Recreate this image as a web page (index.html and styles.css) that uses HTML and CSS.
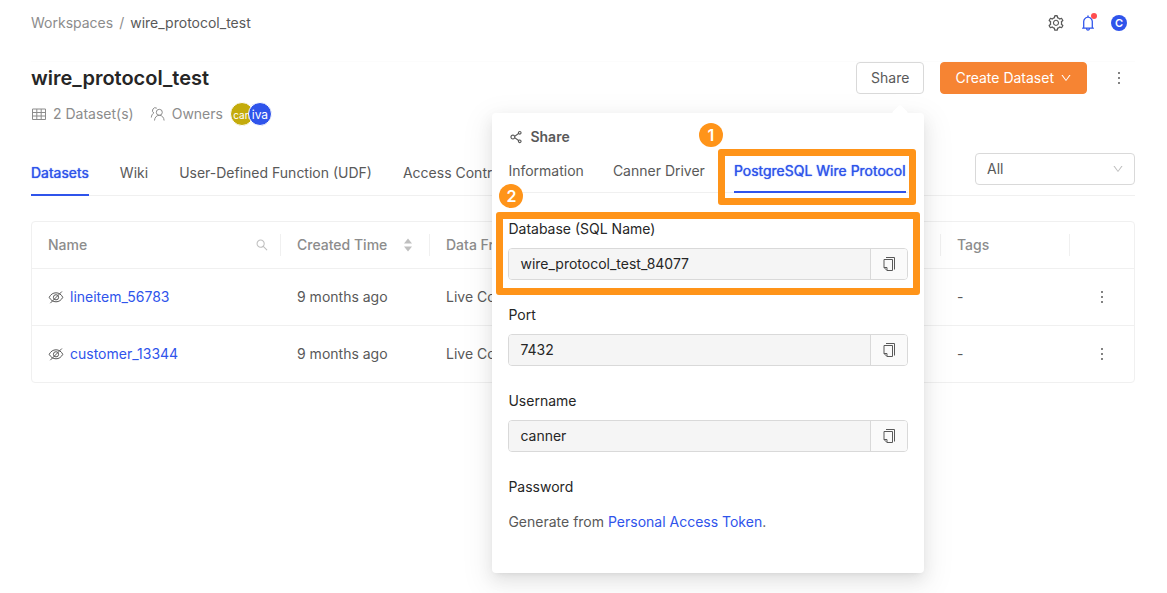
FILE: index.html
```html
<!DOCTYPE html>
<html lang="en">
<head>
<meta charset="utf-8">
<meta name="viewport" content="width=device-width, initial-scale=1">
<title>wire_protocol_test</title>
<link rel="stylesheet" href="styles.css">
</head>
<body>
<svg class="sprite" aria-hidden="true">
  <symbol id="i-gear" viewBox="0 0 1024 1024"><path d="M924.8 625.7l-65.5-56c3.1-19 4.7-38.4 4.7-57.8s-1.6-38.8-4.7-57.8l65.5-56a32.03 32.03 0 009.3-35.2l-.9-2.6a443.74 443.74 0 00-79.7-137.9l-1.8-2.1a32.12 32.12 0 00-35.1-9.5l-81.3 28.9c-30-24.6-63.5-44-99.7-57.6l-15.7-85a32.05 32.05 0 00-25.8-25.7l-2.7-.5c-52.1-9.4-106.9-9.4-159 0l-2.7.5a32.05 32.05 0 00-25.8 25.7l-15.8 85.4a351.86 351.86 0 00-99 57.4l-81.9-29.1a32 32 0 00-35.1 9.5l-1.8 2.1a446.02 446.02 0 00-79.7 137.9l-.9 2.6c-4.5 12.5-.8 26.5 9.3 35.2l66.3 56.6c-3.1 18.8-4.6 38-4.6 57.1 0 19.2 1.5 38.4 4.6 57.1L99 625.5a32.03 32.03 0 00-9.3 35.2l.9 2.6c18.1 50.4 44.9 96.9 79.7 137.9l1.8 2.1a32.12 32.12 0 0035.1 9.5l81.9-29.1c29.8 24.5 63.1 43.9 99 57.4l15.8 85.4a32.05 32.05 0 0025.8 25.7l2.7.5a449.4 449.4 0 00159 0l2.7-.5a32.05 32.05 0 0025.8-25.7l15.7-85a350 350 0 0099.7-57.6l81.3 28.9a32 32 0 0035.1-9.5l1.8-2.1c34.8-41.1 61.6-87.5 79.7-137.9l.9-2.6c4.5-12.3.8-26.3-9.3-35zM788.3 465.9c2.5 15.1 3.8 30.6 3.8 46.1s-1.3 31-3.8 46.1l-6.6 40.1 74.7 63.9a370.03 370.03 0 01-42.6 73.6L721 702.8l-31.4 25.8c-23.9 19.6-50.5 35-79.3 45.8l-38.1 14.3-17.9 97a377.5 377.5 0 01-85 0l-17.9-97.2-37.8-14.5c-28.5-10.8-55-26.2-78.7-45.7l-31.4-25.9-93.4 33.2c-17-22.9-31.2-47.6-42.6-73.6l75.5-64.5-6.5-40c-2.4-14.9-3.7-30.3-3.7-45.5 0-15.3 1.2-30.6 3.7-45.5l6.5-40-75.5-64.5c11.3-26.1 25.6-50.7 42.6-73.6l93.4 33.2 31.4-25.9c23.7-19.5 50.2-34.9 78.7-45.7l37.9-14.3 17.9-97.2c28.1-3.2 56.8-3.2 85 0l17.9 97 38.1 14.3c28.7 10.8 55.4 26.2 79.3 45.8l31.4 25.8 92.8-32.9c17 22.9 31.2 47.6 42.6 73.6L781.8 426l6.5 39.9zM512 326c-97.2 0-176 78.8-176 176s78.8 176 176 176 176-78.8 176-176-78.8-176-176-176zm79.2 255.2A111.6 111.6 0 01512 614c-29.9 0-58-11.7-79.2-32.8A111.6 111.6 0 01400 502c0-29.9 11.7-58 32.8-79.2C454 401.6 482.1 390 512 390c29.9 0 58 11.6 79.2 32.8A111.6 111.6 0 01624 502c0 29.9-11.7 58-32.8 79.2z"/></symbol>
  <symbol id="i-bell" viewBox="0 0 1024 1024"><path d="M816 768h-24V428c0-141.1-104.3-257.7-240-277.1V112c0-22.1-17.9-40-40-40s-40 17.9-40 40v38.9c-135.7 19.4-240 136-240 277.1v340h-24c-17.7 0-32 14.3-32 32v32c0 4.4 3.6 8 8 8h216c0 61.8 50.2 112 112 112s112-50.2 112-112h216c4.4 0 8-3.6 8-8v-32c0-17.7-14.3-32-32-32zM512 888c-26.5 0-48-21.5-48-48h96c0 26.5-21.5 48-48 48zM304 768V428c0-55.6 21.6-107.8 60.9-147.1S456.4 220 512 220c55.6 0 107.8 21.6 147.1 60.9S720 372.4 720 428v340H304z"/></symbol>
  <symbol id="i-down" viewBox="0 0 1024 1024"><path d="M884 256h-75c-5.1 0-9.9 2.5-12.9 6.6L512 654.2 227.9 262.6c-3-4.1-7.8-6.6-12.9-6.6h-75c-6.5 0-10.3 7.4-6.5 12.7l352.6 486.1c12.8 17.6 39 17.6 51.7 0l352.6-486.1c3.9-5.3.1-12.7-6.4-12.7z"/></symbol>
  <symbol id="i-more" viewBox="0 0 1024 1024"><path d="M448 192a64 64 0 10128 0 64 64 0 10-128 0zm0 320a64 64 0 10128 0 64 64 0 10-128 0zm0 320a64 64 0 10128 0 64 64 0 10-128 0z"/></symbol>
  <symbol id="i-search" viewBox="0 0 1024 1024"><path d="M909.6 854.5L649.9 594.8C690.2 542.7 712 479 712 412c0-80.2-31.3-155.4-87.9-212.1-56.6-56.7-132-87.9-212.1-87.9s-155.5 31.3-212.1 87.9C143.2 256.5 112 331.8 112 412c0 80.1 31.3 155.5 87.9 212.1C256.5 680.8 331.8 712 412 712c67 0 130.6-21.8 182.7-62l259.7 259.6a8.2 8.2 0 0011.6 0l43.6-43.5a8.2 8.2 0 000-11.6zM570.4 570.4C528 612.7 471.8 636 412 636s-116-23.3-158.4-65.6C211.3 528 188 471.8 188 412s23.3-116.1 65.6-158.4C296 211.3 352.2 188 412 188s116.1 23.2 158.4 65.6S636 352.2 636 412s-23.3 116.1-65.6 158.4z"/></symbol>
  <symbol id="i-share" viewBox="0 0 1024 1024"><path d="M752 664c-28.5 0-54.8 10-75.4 26.7L469.4 540.8a160.68 160.68 0 000-57.6l207.2-149.9C697.2 350 723.5 360 752 360c66.2 0 120-53.8 120-120s-53.8-120-120-120-120 53.8-120 120c0 11.6 1.6 22.7 4.7 33.3L439.9 415.8C410.7 377.1 364.3 352 312 352c-88.4 0-160 71.6-160 160s71.6 160 160 160c52.3 0 98.7-25.1 127.9-63.8l196.8 142.5c-3.1 10.6-4.7 21.8-4.7 33.3 0 66.2 53.8 120 120 120s120-53.8 120-120-53.8-120-120-120zm0-476c28.7 0 52 23.3 52 52s-23.3 52-52 52-52-23.3-52-52 23.3-52 52-52zM312 600c-48.5 0-88-39.5-88-88s39.5-88 88-88 88 39.5 88 88-39.5 88-88 88zm440 236c-28.7 0-52-23.3-52-52s23.3-52 52-52 52 23.3 52 52-23.3 52-52 52z"/></symbol>
  <symbol id="i-table" viewBox="0 0 16 16"><path class="line" d="M1.500 3h13v10.500h-13zM1.500 6.500h13M1.500 10h13M5.800 3v10.500M10.200 3v10.500"/></symbol>
  <symbol id="i-team" viewBox="0 0 16 16"><path class="line" d="M9.300 9.300a3 3 0 100-6 3 3 0 000 6zM4.500 14.500c.2-3 2-5.200 4.800-5.200s4.600 2.200 4.800 5.200M6.800 2.200A2.700 2.700 0 103.800 7C2.300 7.800 1.500 9.500 1.300 11.500"/></symbol>
  <symbol id="i-hidden" viewBox="0 0 16 16"><path class="line" d="M1.200 8.300C2.800 5.300 5.100 3.800 8 3.800s5.200 1.500 6.800 4.500c-1.600 3-3.900 4.500-6.800 4.500s-5.200-1.500-6.800-4.500zM8 10.900a2.600 2.600 0 100-5.200 2.600 2.600 0 000 5.200zM2.300 14.200L13.900 2.500"/></symbol>
  <symbol id="i-copy" viewBox="0 0 16 16"><path class="line" d="M5 1.500h8.500v12M3 3.500h8.500v11h-5.500l-3-3zM3 11.500h3v3"/></symbol>
  <symbol id="i-sort" viewBox="0 0 10 14"><path d="M5 .5l4 5H1zM5 13.500l4-5H1z"/></symbol>
</svg>

<div class="page">
  <header class="topbar">
    <nav class="crumbs" aria-label="Breadcrumb">
      <a class="crumb" href="#">Workspaces</a><span>/</span><span class="crumb-now">wire_protocol_test</span>
    </nav>
    <div class="tools">
      <button class="icon-btn" aria-label="Settings"><svg class="icon icon-18"><use href="#i-gear"/></svg></button>
      <button class="icon-btn bell" aria-label="Notifications"><svg class="icon icon-18"><use href="#i-bell"/></svg><span class="dot"></span></button>
      <button class="user" aria-label="Account">C</button>
    </div>
  </header>

  <main>
    <section class="heading">
      <div class="heading-text">
        <h1>wire_protocol_test</h1>
        <div class="meta">
          <span class="meta-item"><svg class="icon icon-16"><use href="#i-table"/></svg>2 Dataset(s)</span>
          <span class="meta-item"><svg class="icon icon-16"><use href="#i-team"/></svg>Owners</span>
          <span class="avatars"><span class="avatar gold">can</span><span class="avatar blue">iva</span></span>
        </div>
      </div>
      <div class="actions">
        <div class="share">
          <button class="btn">Share</button>
          <div class="popover" role="dialog" aria-labelledby="share-title">
            <h2 id="share-title"><svg class="icon icon-16"><use href="#i-share"/></svg>Share</h2>
            <div class="tabs" role="tablist">
              <button class="tab" role="tab">Information</button>
              <button class="tab" role="tab">Canner Driver</button>
              <div class="marked">
                <button class="tab active" role="tab" aria-selected="true">PostgreSQL Wire Protocol</button>
                <span class="frame frame-tab"></span><span class="step step-one">1</span>
              </div>
            </div>
            <div class="fields">
              <div class="field">
                <label for="db">Database (SQL Name)</label>
                <div class="copyable"><input id="db" value="wire_protocol_test_84077" readonly><button aria-label="Copy database"><svg class="icon icon-16"><use href="#i-copy"/></svg></button></div>
                <span class="frame frame-field"></span><span class="step step-two">2</span>
              </div>
              <div class="field">
                <label for="port">Port</label>
                <div class="copyable"><input id="port" value="7432" readonly><button aria-label="Copy port"><svg class="icon icon-16"><use href="#i-copy"/></svg></button></div>
              </div>
              <div class="field">
                <label for="username">Username</label>
                <div class="copyable"><input id="username" value="canner" readonly><button aria-label="Copy username"><svg class="icon icon-16"><use href="#i-copy"/></svg></button></div>
              </div>
              <div class="field">
                <h3>Password</h3>
                <p>Generate from <a href="#">Personal Access Token</a>.</p>
              </div>
            </div>
          </div>
        </div>
        <button class="btn primary">Create Dataset<svg class="icon icon-12"><use href="#i-down"/></svg></button>
        <button class="more" aria-label="More actions"><svg class="icon icon-16"><use href="#i-more"/></svg></button>
      </div>
    </section>

    <div class="tabs main-tabs">
      <div class="tab-list" role="tablist">
        <button class="tab active" role="tab" aria-selected="true">Datasets</button>
        <button class="tab" role="tab">Wiki</button>
        <button class="tab" role="tab">User-Defined Function (UDF)</button>
        <button class="tab" role="tab">Access Control</button>
      </div>
      <div class="filter">
        <select aria-label="Dataset filter"><option>All</option></select>
        <svg class="icon icon-12"><use href="#i-down"/></svg>
      </div>
    </div>

    <table class="datasets">
      <colgroup><col class="c-name"><col class="c-time"><col class="c-from"><col class="c-tags"><col class="c-more"></colgroup>
      <thead>
        <tr>
          <th><div class="th">Name<svg class="icon icon-14"><use href="#i-search"/></svg></div></th>
          <th><div class="th">Created Time<svg class="icon sort"><use href="#i-sort"/></svg></div></th>
          <th><div class="th">Data From</div></th>
          <th><div class="th">Tags</div></th>
          <th><div class="th"></div></th>
        </tr>
      </thead>
      <tbody>
        <tr>
          <td><a class="name" href="#"><svg class="icon icon-16"><use href="#i-hidden"/></svg>lineitem_56783</a></td>
          <td>9 months ago</td><td>Live Connection</td><td>-</td>
          <td><button class="more" aria-label="Actions for lineitem_56783"><svg class="icon icon-16"><use href="#i-more"/></svg></button></td>
        </tr>
        <tr>
          <td><a class="name" href="#"><svg class="icon icon-16"><use href="#i-hidden"/></svg>customer_13344</a></td>
          <td>9 months ago</td><td>Live Connection</td><td>-</td>
          <td><button class="more" aria-label="Actions for customer_13344"><svg class="icon icon-16"><use href="#i-more"/></svg></button></td>
        </tr>
      </tbody>
    </table>
  </main>
</div>
</body>
</html>
```
FILE: styles.css
```css
* { box-sizing: border-box; }
body {
  min-height: 100vh;
  margin: 0;
  background: #fff;
  color: #595959;
  font: 14px/22px Inter, "Liberation Sans", sans-serif;
}
button, input, select { font: inherit; color: inherit; margin: 0; }
button { padding: 0; border: 0; background: none; cursor: pointer; }
a { color: #2f54eb; text-decoration: none; }
h1, h2, h3, p { margin: 0; }

.sprite { position: absolute; width: 0; height: 0; }
.icon { display: block; flex: none; fill: currentColor; }
.icon-12 { width: 12px; height: 12px; }
.icon-14 { width: 14px; height: 14px; }
.icon-16 { width: 16px; height: 16px; }
.icon-18 { width: 18px; height: 18px; }
.line { fill: none; stroke: currentColor; stroke-width: 1; }

.page { min-height: 100vh; padding: 0 32px 0 31px; }

.topbar {
  display: flex;
  justify-content: space-between;
  align-items: flex-start;
  height: 62px;
  padding-top: 12px;
  border-bottom: 1px solid #fcfcfc;
}
.crumbs { display: flex; gap: 6px; color: #8c8c8c; }
.crumb { color: #8c8c8c; }
.crumb-now { color: #595959; }
.tools { display: flex; align-items: center; gap: 14px; padding-right: 8px; }
.icon-btn { display: block; height: 22px; padding: 2px 0; color: #595959; }
.bell { position: relative; color: #2f54eb; }
.dot {
  position: absolute;
  top: 1px;
  right: 0;
  width: 6px;
  height: 6px;
  border-radius: 50%;
  background: #ff4d4f;
}
.user {
  width: 16px;
  height: 16px;
  border-radius: 50%;
  background: #2f54eb;
  color: #fff;
  font-size: 11px;
  font-weight: 600;
  line-height: 16px;
}

.heading { display: flex; justify-content: space-between; align-items: flex-start; }
h1 { color: #262626; font-size: 20px; font-weight: 600; line-height: 32px; }
.meta { display: flex; align-items: center; gap: 16px; height: 24px; margin-top: 8px; color: #8c8c8c; }
.meta-item { display: flex; align-items: center; gap: 6px; }
.avatars { display: flex; margin-left: -9px; }
.avatar {
  width: 24px;
  height: 24px;
  margin-right: -6px;
  border: 1px solid #fff;
  border-radius: 50%;
  overflow: hidden;
  color: #fff;
  font-size: 12px;
  line-height: 24px;
  text-align: center;
}
.gold { background: #c4ab0b; font-size: 10px; }
.blue { background: #2f54eb; }

.actions { display: flex; gap: 16px; }
.share { position: relative; }
.btn {
  display: flex;
  align-items: center;
  gap: 6px;
  height: 32px;
  padding: 0 14px;
  border: 1px solid #d9d9d9;
  border-radius: 4px;
  background: #fff;
}
.primary { border-color: #f68433; background: #f68433; color: #fff; }
.more { display: flex; align-items: center; justify-content: center; width: 32px; height: 32px; }

.tabs { display: flex; gap: 29px; border-bottom: 1px solid #f0f0f0; }
.tab { display: block; margin-bottom: -1px; border-bottom: 2px solid transparent; white-space: nowrap; }
.tab.active { border-color: #2f54eb; color: #2f54eb; text-shadow: 0 0 1px currentColor; }
.main-tabs { justify-content: space-between; margin-top: 27px; }
.tab-list { display: flex; align-items: flex-end; gap: 31px; }
.main-tabs .tab { padding-bottom: 10px; }

.filter { position: relative; width: 160px; padding-bottom: 10px; }
.filter select {
  display: block;
  width: 100%;
  height: 32px;
  padding: 0 11px;
  border: 1px solid #d9d9d9;
  border-radius: 4px;
  background: #fff;
  appearance: none;
}
.filter .icon { position: absolute; top: 10px; right: 11px; color: #bfbfbf; pointer-events: none; }

.datasets {
  width: 100%;
  margin-top: 25px;
  border: 1px solid #f0f0f0;
  border-radius: 4px;
  border-spacing: 0;
  table-layout: fixed;
}
.c-name { width: 249px; }
.c-time { width: 149px; }
.c-tags { width: 129px; }
.c-more { width: 64px; }
th { padding: 12px 0; border-bottom: 1px solid #f0f0f0; color: #8c8c8c; font-weight: 500; text-align: left; }
.th {
  display: flex;
  align-items: center;
  justify-content: space-between;
  height: 22px;
  padding: 0 16px;
  border-right: 1px solid #f0f0f0;
}
th:first-child .th { padding-right: 11px; }
th:last-child .th { border-right: 0; }
th .icon { color: #bfbfbf; }
.sort { width: 10px; height: 14px; }
td { height: 57px; padding: 0 16px; border-bottom: 1px solid #f0f0f0; }
tr:last-child td { height: 56px; border-bottom: 0; }
.name { display: flex; align-items: center; gap: 6px; }
.name .icon { color: #595959; }

.popover {
  position: absolute;
  z-index: 2;
  top: 51px;
  right: 0;
  width: 432px;
  padding: 13px 16px 40px;
  border-radius: 4px;
  background: #fff;
  box-shadow: 0 3px 6px -4px rgba(0, 0, 0, .12), 0 6px 16px rgba(0, 0, 0, .08), 0 9px 28px 8px rgba(0, 0, 0, .05);
}
.popover::before {
  content: "";
  position: absolute;
  top: -6px;
  right: 18px;
  width: 12px;
  height: 12px;
  border-radius: 2px;
  background: #fff;
  transform: rotate(45deg);
}
h2 { display: flex; align-items: center; gap: 6px; font-size: 14px; font-weight: 600; line-height: 22px; }
.popover .tabs { margin-top: 12px; }
.popover .tab { padding-bottom: 9px; }
.marked { position: relative; }
.fields { display: flex; flex-direction: column; gap: 24px; margin-top: 25px; }
.field { position: relative; color: #262626; }
.field label, .field h3 { display: block; font-size: 14px; font-weight: 400; line-height: 22px; }
.field p { margin-top: 13px; color: #595959; }
.copyable {
  display: flex;
  height: 32px;
  margin-top: 8px;
  border: 1px solid #d9d9d9;
  border-radius: 4px;
  overflow: hidden;
}
.copyable input { flex: 1; min-width: 0; padding: 0 11px; border: 0; background: #f5f5f5; }
.copyable button {
  display: flex;
  align-items: center;
  justify-content: center;
  width: 37px;
  border-left: 1px solid #d9d9d9;
  background: #fafafa;
  color: #595959;
}

/* Tutorial highlights */
.frame { position: absolute; border: 7px solid #ff9419; border-radius: 3px; pointer-events: none; }
.frame-tab { inset: -11px -10px -13px -16px; }
.frame-field { inset: -6px -12px -15px; }
.step {
  position: absolute;
  width: 24px;
  height: 24px;
  border-radius: 50%;
  background: #ff9419;
  color: #fff;
  font-size: 16px;
  font-weight: 600;
  line-height: 24px;
  text-align: center;
}
.step-one { top: -37px; left: -35px; }
.step-two { top: -34px; left: -9px; }
```
